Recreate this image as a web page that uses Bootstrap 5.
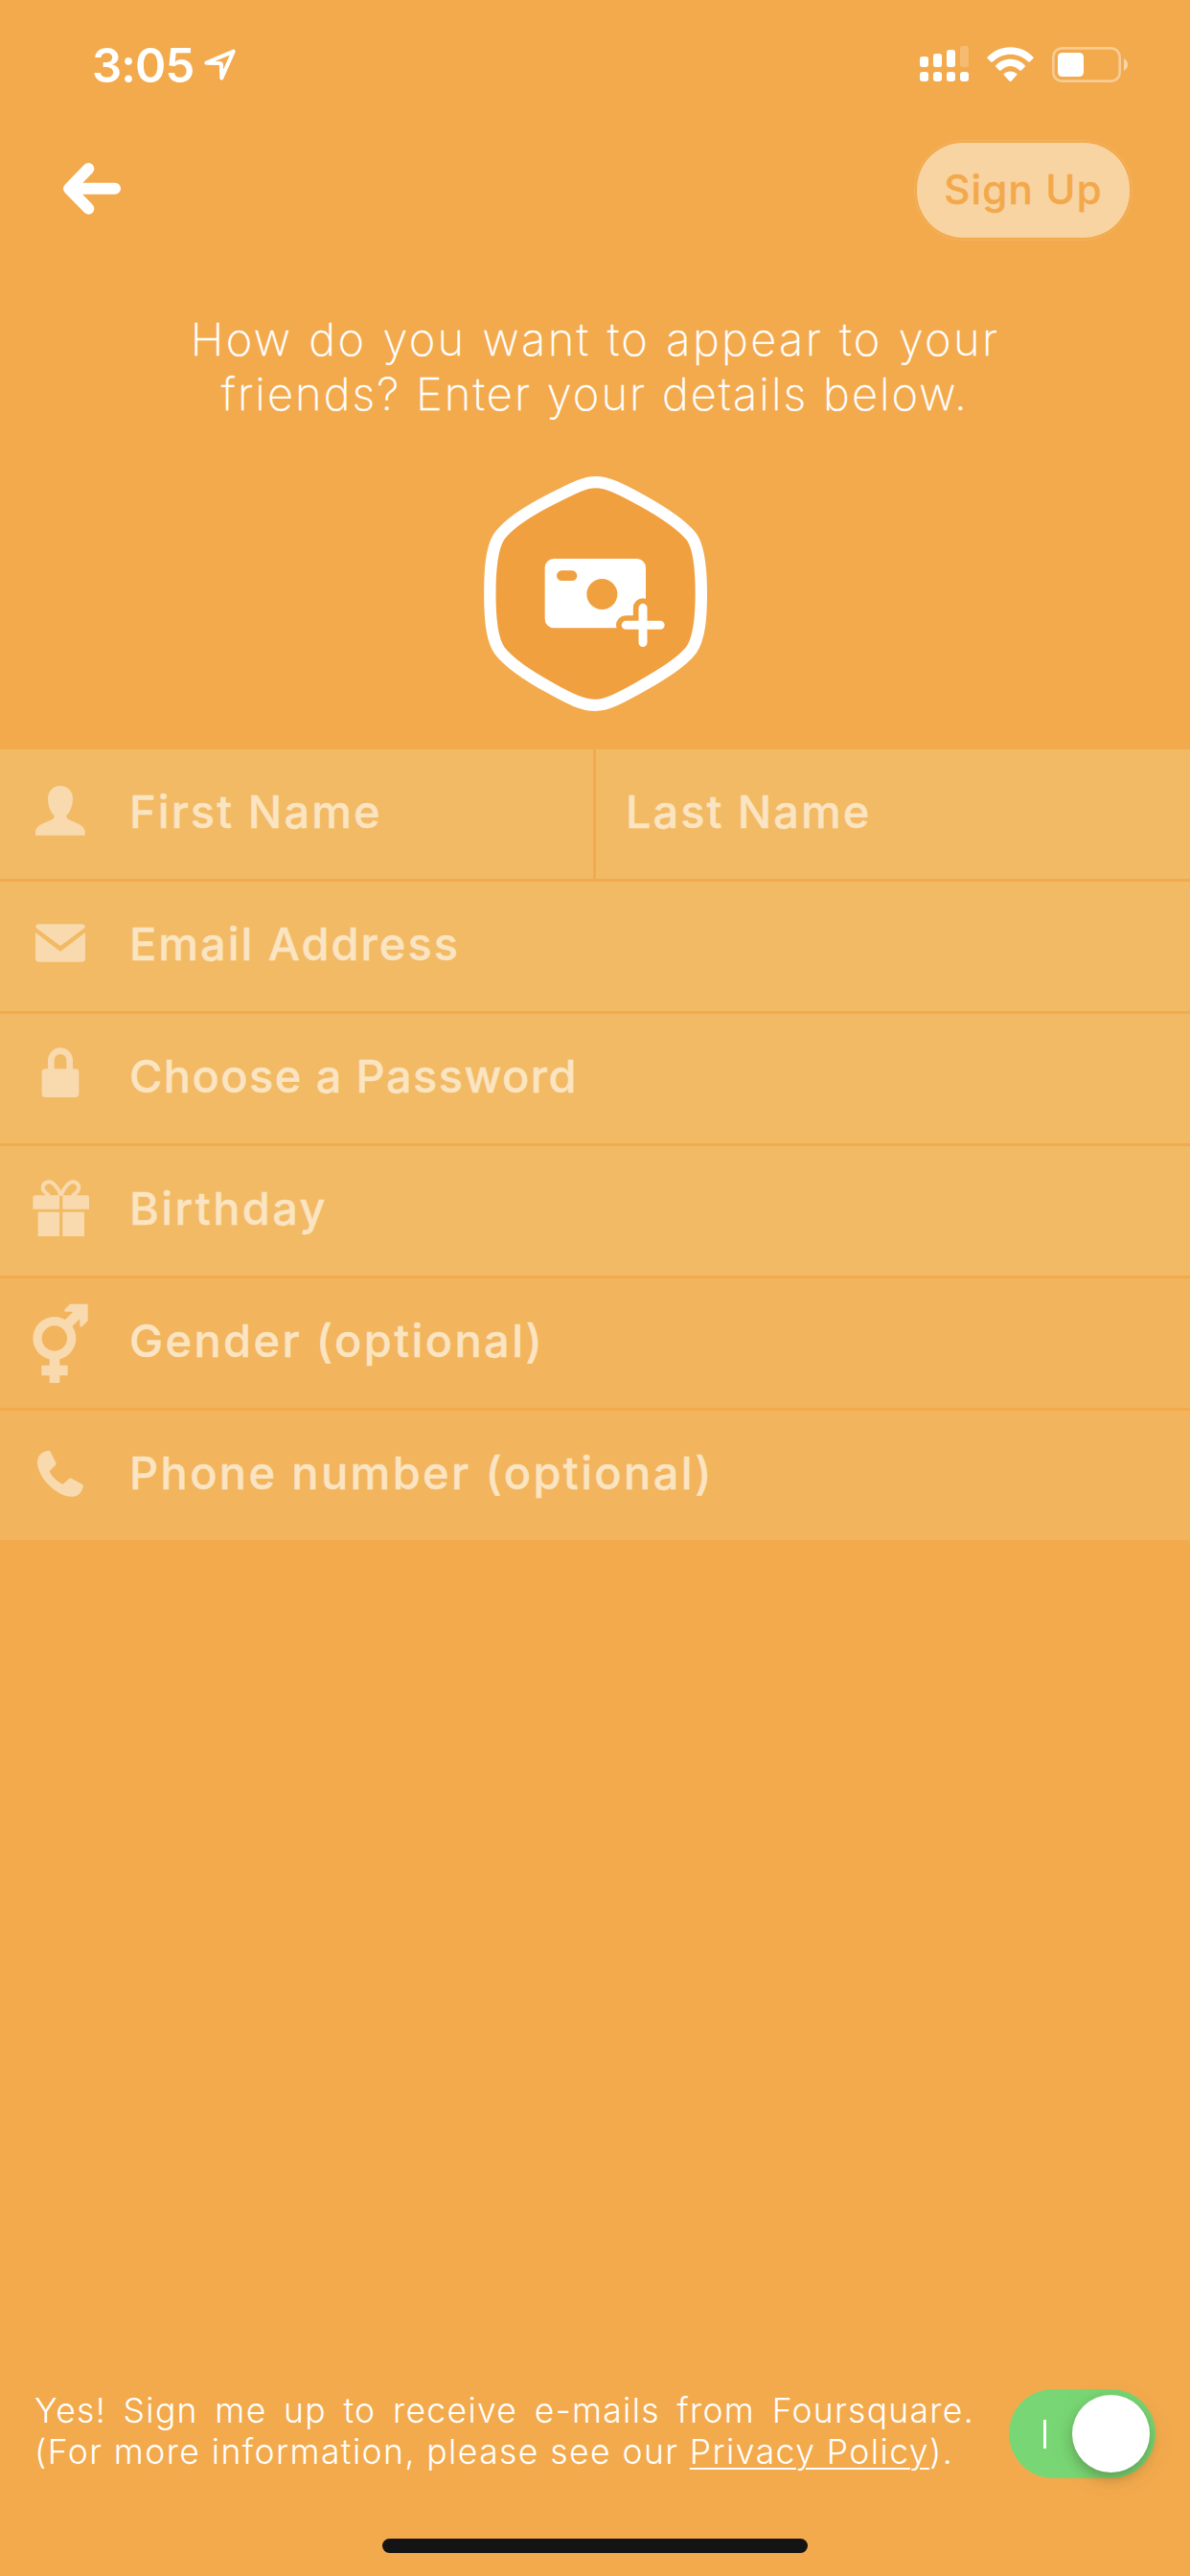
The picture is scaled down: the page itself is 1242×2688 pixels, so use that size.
<!DOCTYPE html>
<html lang="en">
<head>
<meta charset="utf-8">
<meta name="viewport" content="width=device-width, initial-scale=1">
<title>Sign Up</title>
<link rel="stylesheet" href="https://cdn.jsdelivr.net/npm/bootstrap@5.3.0/dist/css/bootstrap.min.css">
<style>
body{background:#f3aa4d;color:#fff;font-family:Inter,"Noto Sans",sans-serif;font-kerning:normal}
svg{display:block;flex:none}
.screen{width:1242px;height:2688px;overflow:hidden}
.status{height:98px;padding:39px 63px 0 96px}
.clock{font-size:49px;line-height:60px;font-weight:600;letter-spacing:-.9px;width:117px}
.location{margin-top:12px}
.indicators{margin-top:7px}
.topbar{height:99px;margin-top:51px;padding:0 63px 0 66px}
.back{margin-top:-3px}
.btn-signup,.btn-signup:hover{width:222px;height:99px;border:0;border-radius:48px;background:#f8d4a2;color:#f3a94b;font-size:42px;font-weight:500;-webkit-text-stroke:.4px #f3a94b;letter-spacing:1.2px;line-height:96px;padding:0 0 1px;outline:1px solid #f4b25f;outline-offset:2px}
.intro{margin:77px 0 0;font-size:47px;line-height:57px;font-weight:200;-webkit-text-stroke:.3px #fff}
.intro-a{letter-spacing:2.35px;word-spacing:1.5px}
.intro-b{letter-spacing:2.05px;word-spacing:.5px}
.avatar{margin-top:58px}
.fields{margin-top:40px;gap:3px}
.names{gap:3px}
.field{height:135px;background:#f2ba65}
.first-name{width:619px}
.field-optional{background:#f2b45d}
.field-label{font-size:47px;font-weight:500;-webkit-text-stroke:.4px #fbe4c1;line-height:130px;color:#fbe4c1;padding-left:9px;white-space:nowrap}
.field svg{fill:#f8daae}
.ls-a{letter-spacing:2.05px}.ls-b{letter-spacing:1.95px}.ls-c{letter-spacing:1.38px}.ls-d{letter-spacing:2.35px}
.last-name{padding-left:31px}
.optin{margin:0 36px;height:93px}
.optin-text{width:981px;padding-top:1px;font-size:35.5px;line-height:43px;font-weight:300;white-space:nowrap}
.optin-text .justified{text-align:justify;text-align-last:justify;letter-spacing:1.3px}
.optin-text .natural{letter-spacing:1.43px}
.optin-text a{color:#fff;text-decoration-thickness:2px;text-underline-offset:4px}
.toggle{width:153px;height:93px;border-radius:47px;background:#78d774;padding:6px 6px 6px 36px}
.toggle-mark{width:3px;height:30px;background:#fff}
.toggle-knob{width:81px;height:81px;border-radius:50%;background:#fff;box-shadow:0 6px 12px rgba(40,40,20,.24),0 6px 26px rgba(90,70,30,.13)}
.homebar{width:444px;height:15px;border-radius:8px;background:#141414;margin:63px auto 24px}
</style>
</head>
<body>
<main class="screen d-flex flex-column">
  <div class="status d-flex align-items-start">
    <div class="clock">3:05</div>
    <svg class="location" width="34" height="34" viewBox="637 153 102 102"><path d="M644 197 729 161 692 244 691 204Q691 198 685 198Z" fill="none" stroke="#fff" stroke-width="12" stroke-linejoin="round"/></svg>
    <svg class="indicators ms-auto" width="219" height="42" viewBox="180 138 657 126" fill="#fff">
      <g><rect x="180" y="177" width="27" height="33" rx="8"/><rect x="222" y="168" width="27" height="42" rx="8"/><rect x="264" y="156" width="27" height="54" rx="8"/><rect x="306" y="144" width="27" height="66" rx="8" opacity=".2"/>
      <rect x="180" y="225" width="27" height="30" rx="9"/><rect x="222" y="225" width="27" height="30" rx="9"/><rect x="264" y="225" width="27" height="30" rx="9"/><rect x="306" y="225" width="27" height="30" rx="9"/></g>
      <path d="M390 181C428 137 500 137 537 181L524 194Q521 195 518 192C486 163 442 163 410 192Q407 195 403 194Z"/>
      <path d="M416 207C440 178 487 178 511 207L497 221Q494 222 491 219C474 203 453 203 436 219Q433 222 430 221Z"/>
      <path d="M442 233C453 220 474 220 485 233L466 254Q463 256 461 254Z"/>
      <rect x="598" y="151" width="208" height="103" rx="27" fill="none" stroke="#fff" stroke-width="8" opacity=".4"/>
      <rect x="612" y="165" width="81" height="75" rx="14"/>
      <path d="M819 182Q831 190 831 202T819 222Z" opacity=".5"/>
    </svg>
  </div>
  <header class="topbar d-flex align-items-center justify-content-between">
    <svg class="back" width="60" height="54" viewBox="198 510 180 162" role="img" aria-label="Back"><path d="M277 528 216 590.5 277 653M220 590.5H360" fill="none" stroke="#fff" stroke-width="36" stroke-linecap="round" stroke-linejoin="round"/></svg>
    <button type="button" class="btn btn-signup">Sign Up</button>
  </header>
  <h1 class="intro text-center"><span class="intro-a">How do you want to appear to your</span><br><span class="intro-b">friends? Enter your details below.</span></h1>
  <div class="avatar d-flex justify-content-center">
    <svg width="233" height="245" viewBox="72 51 699 735" role="img" aria-label="Add photo">
      <path d="M421.500 69.500C460 69.500 500 90 562 124C635 164 693 204 722 240C748 276 752.500 350 752.500 418C752.500 490 748 556 722 594C693 632 635 668 562 710C500 744 460 767.500 421.500 767.500C383 767.500 345 750 281 714C208 674 150 634 121 596C95 560 91 490 91 418C91 350 94 280 120 239C148 202 208 161 281 124C345 92 383 69.500 421.500 69.500Z" fill="#f1a03f" stroke="#fff" stroke-width="37"/>
      <rect x="263" y="309" width="316" height="217" rx="28" fill="#fff"/>
      <g fill="#f1a03f"><rect x="300" y="346" width="64" height="32" rx="16"/><circle cx="442" cy="420" r="48"/></g>
      <path d="M516.500 517H624.500M570 463V571.500" stroke="#f1a03f" stroke-width="61" stroke-linecap="round"/>
      <path d="M516.500 517H624.500M570 463V571.500" stroke="#fff" stroke-width="27" stroke-linecap="round"/>
    </svg>
  </div>
  <section class="fields d-flex flex-column">
    <div class="names d-flex">
      <div class="field first-name d-flex">
        <svg width="126" height="135" viewBox="0 36 378 405"><path d="M189 150C213 150 228 168 228 190C228 212 219 236 207 244Q208 252 218 257C240 266 266 273 266 294V305H111V294C111 273 138 266 160 257Q170 252 171 244C159 236 150 212 150 190C150 168 165 150 189 150Z"/></svg>
        <div class="field-label ls-a">First Name</div>
      </div>
      <div class="field flex-fill"><div class="field-label last-name ls-b">Last Name</div></div>
    </div>
    <div class="field d-flex">
      <svg width="126" height="135" viewBox="0 450 378 405"><path d="M122 583H256Q267 584 266 594L189 651 112 594Q111 584 122 583ZM111 609 189 669 267 609V690Q267 701 256 701H122Q111 701 111 690Z"/></svg>
      <div class="field-label ls-b">Email Address</div>
    </div>
    <div class="field d-flex">
      <svg width="126" height="135" viewBox="0 -6 378 405"><path d="M160 172V139A29 29 0 0 1 218 139V172" fill="none" stroke="#f8daae" stroke-width="20"/><rect x="131" y="166" width="116" height="89" rx="11"/></svg>
      <div class="field-label ls-c">Choose a Password</div>
    </div>
    <div class="field d-flex">
      <svg width="126" height="135" viewBox="0 408 378 405"><path d="M109 562H186V605H103V570Q103 562 109 562ZM196 562H273Q279 562 279 570V605H196ZM119 614H186V690H119ZM196 614H264V690H196Z"/><path d="M191 562C183 540 166 519 153 520C135 521 129 538 139 550Q145 557 155 563M191 562C199 540 216 519 229 520C247 521 251 538 242 550Q236 557 226 563" fill="none" stroke="#f8daae" stroke-width="12"/></svg>
      <div class="field-label ls-d">Birthday</div>
    </div>
    <div class="field field-optional d-flex">
      <svg width="126" height="135" viewBox="0 42 378 405"><path d="M170.500 162A67.500 67.500 0 1 0 170.500 297A67.500 67.500 0 1 0 170.500 162ZM170.500 190A39.500 39.500 0 1 1 170.500 269A39.500 39.500 0 1 1 170.500 190Z" fill-rule="evenodd"/><path d="M201 174 229 146H205Q199 146 203 139L219 122H273Q275 122 275 126V175L257 193Q250 197 250 190V169L223 195ZM155 294H187V314H212V346H187V369H155V346H130V314H155Z"/></svg>
      <div class="field-label ls-d">Gender (optional)</div>
    </div>
    <div class="field field-optional d-flex">
      <svg width="126" height="135" viewBox="0 456 378 405"><path d="M152 581Q156 581 158 585L175 619Q177 623 174 626L155 645C158 657 181 682 197 686L217 668Q220 666 224 668L257 686Q261 688 261 692C256 712 246 724 227 725C185 728 122 674 117 621C116 598 130 583 152 581Z"/></svg>
      <div class="field-label ls-d">Phone number (optional)</div>
    </div>
  </section>
  <div class="mt-auto">
    <div class="optin d-flex justify-content-between">
      <div class="optin-text">
        <div class="justified">Yes! Sign me up to receive e-mails from Foursquare.</div>
        <div class="natural">(For more information, please see our <a href="#">Privacy Policy</a>).</div>
      </div>
      <div class="toggle d-flex align-items-center justify-content-between" role="switch" aria-checked="true" aria-label="Receive e-mails"><div class="toggle-mark"></div><div class="toggle-knob"></div></div>
    </div>
    <div class="homebar"></div>
  </div>
</main>
<script src="https://cdn.jsdelivr.net/npm/bootstrap@5.3.0/dist/js/bootstrap.bundle.min.js"></script>
</body>
</html>
